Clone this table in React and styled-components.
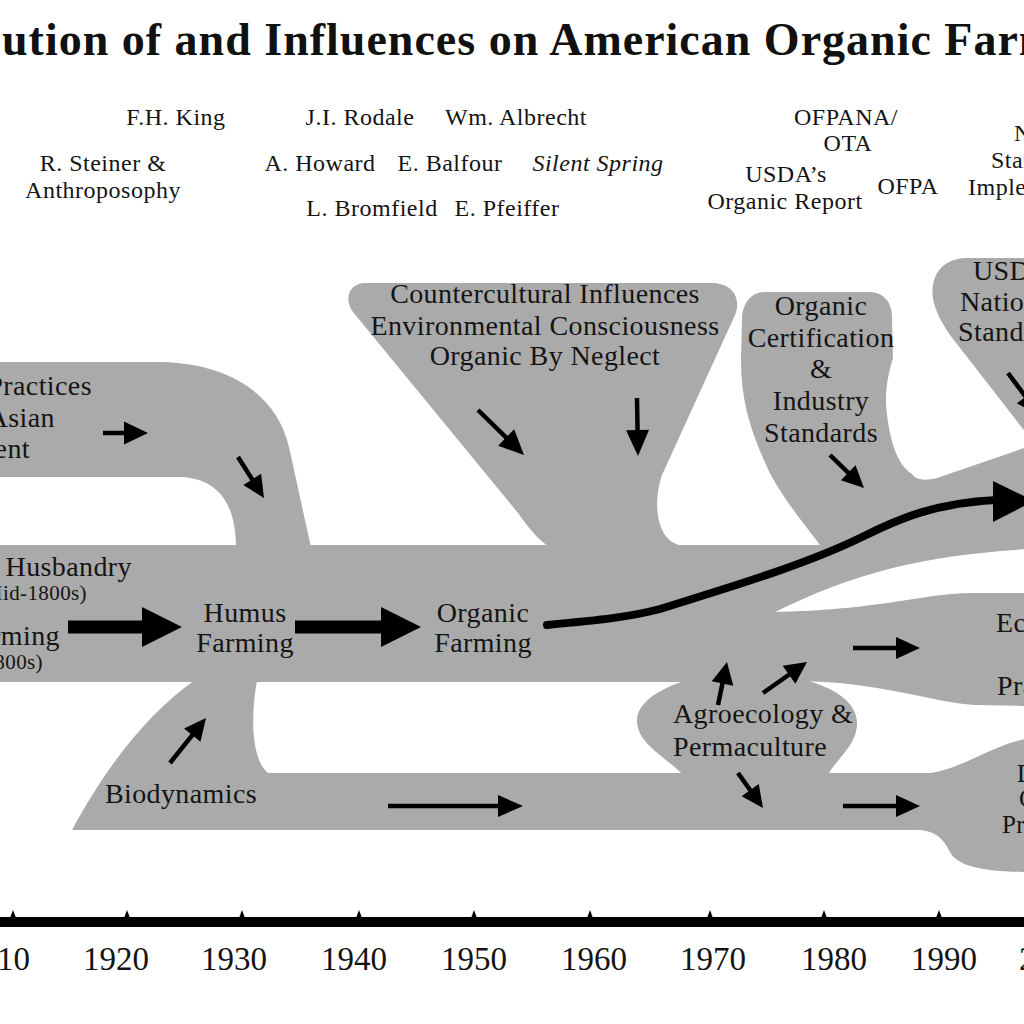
import React from "react";
import styled, { createGlobalStyle } from "styled-components";

/* page reset */
const GlobalStyle = createGlobalStyle`
  html, body {
    margin: 0;
    padding: 0;
    background: #fff;
  }
  body {
    font-family: "Liberation Serif", "Times New Roman", serif;
    color: #111;
  }
`;

const Page = styled.div`
  width: 1024px;
  height: 1024px;
  overflow: hidden;
  display: flex;
  flex-direction: column;
  background: #fff;
`;

const Title = styled.h1`
  flex: none;
  margin: 0;
  height: 72px;
  box-sizing: border-box;
  padding: 8px 0 0 2px;
  line-height: 64px;
  font-size: 46px;
  font-weight: bold;
  letter-spacing: 1px;
  white-space: nowrap;
  overflow: hidden;
  color: #111;
`;

const Diagram = styled.svg`
  flex: none;
  display: block;
  width: 1024px;
  height: 952px;
`;

const Stream = styled.path`
  fill: #aaaaaa;
`;

const Label = styled.text`
  font-family: "Liberation Serif", "Times New Roman", serif;
  font-size: ${(p) => p.$size}px;
  font-style: ${(p) => (p.$italic ? "italic" : "normal")};
  letter-spacing: ${(p) => p.$spacing}px;
  text-anchor: ${(p) => p.$anchor};
  fill: #141414;
`;

const Shaft = styled.line`
  stroke: #000;
  stroke-linecap: butt;
`;

const Head = styled.polygon`
  fill: #000;
`;

const Trend = styled.path`
  fill: none;
  stroke: #000;
  stroke-width: 8;
  stroke-linecap: round;
`;

const AxisBar = styled.rect`
  fill: #000;
`;

const Tick = styled.polygon`
  fill: #000;
`;

// grey streams of the diagram
const STREAMS = [
  // traditional practices band curving into main band
  "M -10 362 L 163 362 C 230 364 277 395 289 447 L 312 552 L 236 552 C 237 512 224 480 183 477 L -10 477 Z",
  // main band
  "M -10 545 L 776 545 L 776 682 L -10 682 Z",
  // countercultural funnel
  "M 365 283 L 712 283 C 732 283 742 298 735 315 L 662 475 C 655 495 655 520 665 535 C 670 542 676 545 690 548 L 556 550 C 542 545 530 530 518 513 L 353 312 C 343 298 350 283 365 283 Z",
  // certification
  "M 765 292 L 868 292 C 884 292 892 302 892 318 L 893 358 C 888 375 884 392 887 415 C 891 445 898 465 912 474 L 912 560 L 820 560 L 820 545 C 805 525 780 495 767 467 C 750 430 741 400 741 360 L 742 318 C 743 302 752 292 765 292 Z",
  // upper branch toward USDA standards
  "M 760 545 L 820 545 L 900 474 L 912 474 C 916 480 924 481 937 478 L 1030 446 L 1030 549 C 930 555 860 570 773 613 L 760 613 Z",
  // USDA standards
  "M 965 258 L 1030 258 L 1030 438 L 950 335 C 938 318 930 300 933 285 C 936 268 948 259 965 258 Z",
  // lower branch to the right
  "M 760 613 L 773 612 C 880 610 920 594 970 593 L 1030 593 L 1030 706 L 975 705 C 930 702 880 682 800 681 L 760 681 Z",
  // agroecology blob
  "M 687 680 C 655 690 636 705 637 722 C 638 745 668 758 683 775 L 828 775 C 835 760 858 745 857 722 C 856 702 835 688 805 680 Z",
  // biodynamics band
  "M 72 830 C 110 760 150 712 195 680 L 257 680 C 250 720 252 760 268 773 L 930 773 C 965 768 990 745 1030 738 L 1030 872 C 990 872 958 868 950 852 C 943 838 935 830 915 830 Z",
];

const TOP_LABELS = [
  { t: "F.H. King", x: 176, y: 125 },
  { t: "J.I. Rodale", x: 360, y: 125 },
  { t: "Wm. Albrecht", x: 516, y: 125 },
  { t: "R. Steiner &", x: 103, y: 171 },
  { t: "Anthroposophy", x: 103, y: 198 },
  { t: "A. Howard", x: 320, y: 171 },
  { t: "E. Balfour", x: 450, y: 171 },
  { t: "Silent Spring", x: 598, y: 171, italic: true },
  { t: "L. Bromfield", x: 372, y: 216 },
  { t: "E. Pfeiffer", x: 507, y: 216 },
  { t: "OFPANA/", x: 846, y: 125 },
  { t: "OTA", x: 848, y: 151 },
  { t: "USDA’s", x: 786, y: 182 },
  { t: "Organic Report", x: 785, y: 209 },
  { t: "OFPA", x: 908, y: 194 },
  { t: "NOP", x: 1014, y: 141, anchor: "start" },
  { t: "Standards", x: 991, y: 168, anchor: "start" },
  { t: "Implemented", x: 968, y: 195, anchor: "start" },
];

const STREAM_LABELS = [
  { t: "Countercultural Influences", x: 545, y: 303 },
  { t: "Environmental Consciousness", x: 545, y: 335 },
  { t: "Organic By Neglect", x: 545, y: 365 },
  { t: "Organic", x: 821, y: 315 },
  { t: "Certification", x: 821, y: 347 },
  { t: "&", x: 821, y: 378 },
  { t: "Industry", x: 821, y: 410 },
  { t: "Standards", x: 821, y: 442 },
  { t: "USDA", x: 973, y: 280, anchor: "start" },
  { t: "National", x: 960, y: 311, anchor: "start" },
  { t: "Standards", x: 958, y: 341, anchor: "start" },
  { t: "Traditional Practices", x: 92, y: 395, anchor: "end" },
  { t: "from the Asian", x: 55, y: 427, anchor: "end" },
  { t: "Continent", x: 30, y: 458, anchor: "end" },
  { t: "Animal Husbandry", x: 132, y: 576, anchor: "end" },
  { t: "(Mid-1800s)", x: 87, y: 600, anchor: "end", size: 21 },
  { t: "Farming", x: 60, y: 645, anchor: "end" },
  { t: "(Late 1800s)", x: 43, y: 669, anchor: "end", size: 21 },
  { t: "Humus", x: 245, y: 622 },
  { t: "Farming", x: 245, y: 652 },
  { t: "Organic", x: 483, y: 622 },
  { t: "Farming", x: 483, y: 652 },
  { t: "Biodynamics", x: 181, y: 803 },
  { t: "Agroecology &", x: 673, y: 723, anchor: "start" },
  { t: "Permaculture", x: 673, y: 756, anchor: "start" },
  { t: "Ecological", x: 996, y: 632, anchor: "start" },
  { t: "Practices", x: 997, y: 695, anchor: "start" },
  { t: "Direct", x: 1017, y: 782, anchor: "start", size: 25 },
  { t: "Consumer", x: 1019, y: 807, anchor: "start", size: 25 },
  { t: "Programs", x: 1002, y: 833, anchor: "start", size: 25 },
];

// [x1, y1, x2, y2, shaft width, head length, head width]
const ARROWS = [
  [103, 433, 148, 433, 4.5, 24, 23],
  [238, 457, 264, 498, 4.5, 22, 21],
  [478, 410, 524, 455, 4.5, 25, 23],
  [637, 398, 638, 456, 4.5, 26, 23],
  [830, 455, 864, 488, 4.5, 22, 21],
  [1008, 373, 1040, 416, 4.5, 24, 22],
  [170, 763, 206, 718, 4.5, 22, 21],
  [388, 806, 523, 806, 4.5, 25, 22],
  [843, 806, 920, 806, 4.5, 24, 22],
  [853, 648, 920, 648, 4.5, 24, 22],
  [718, 705, 727, 662, 4.5, 22, 22],
  [763, 693, 807, 662, 4.5, 22, 22],
  [738, 773, 763, 808, 4.5, 22, 21],
  [68, 627, 182, 627, 13, 40, 40],
  [295, 627, 421, 627, 13, 40, 40],
];

const YEARS = [
  { t: "1910", x: -3 },
  { t: "1920", x: 116 },
  { t: "1930", x: 234 },
  { t: "1940", x: 354 },
  { t: "1950", x: 474 },
  { t: "1960", x: 594 },
  { t: "1970", x: 713 },
  { t: "1980", x: 834 },
  { t: "1990", x: 944 },
  { t: "2000", x: 1052 },
];

const TICKS = [13, 127, 242, 359, 474, 590, 710, 824, 939];

function Arrow({ x1, y1, x2, y2, w, head, spread }) {
  const dx = x2 - x1;
  const dy = y2 - y1;
  const len = Math.hypot(dx, dy);
  const ux = dx / len;
  const uy = dy / len;
  const bx = x2 - ux * head;
  const by = y2 - uy * head;
  const px = (-uy * spread) / 2;
  const py = (ux * spread) / 2;
  return (
    <g>
      <Shaft x1={x1} y1={y1} x2={bx + ux * 2} y2={by + uy * 2} strokeWidth={w} />
      <Head points={`${x2},${y2} ${bx + px},${by + py} ${bx - px},${by - py}`} />
    </g>
  );
}

export default function App() {
  return (
    <Page>
      <GlobalStyle />
      <Title>ution of and Influences on American Organic Farming</Title>
      <Diagram viewBox="0 72 1024 952">
        {STREAMS.map((d, i) => (
          <Stream key={i} d={d} />
        ))}

        <Trend d="M 547 625 C 600 620 630 617 660 609 C 720 590 800 567 860 538 C 900 518 935 503 997 500" />
        <Head points="993,481 1034,501 993,522" />

        {ARROWS.map(([x1, y1, x2, y2, w, head, spread], i) => (
          <Arrow key={i} x1={x1} y1={y1} x2={x2} y2={y2} w={w} head={head} spread={spread} />
        ))}

        {TOP_LABELS.map((l) => (
          <Label
            key={l.t + l.x}
            x={l.x}
            y={l.y}
            $size={24}
            $spacing={0.5}
            $italic={l.italic}
            $anchor={l.anchor || "middle"}
          >
            {l.t}
          </Label>
        ))}

        {STREAM_LABELS.map((l) => (
          <Label
            key={l.t + l.x + l.y}
            x={l.x}
            y={l.y}
            $size={l.size || 28}
            $spacing={0.4}
            $anchor={l.anchor || "middle"}
          >
            {l.t}
          </Label>
        ))}

        <AxisBar x={-5} y={917} width={1040} height={10} />
        {TICKS.map((x) => (
          <Tick key={x} points={`${x - 3},918 ${x},910 ${x + 3},918`} />
        ))}
        {YEARS.map((y) => (
          <Label key={y.t} x={y.x} y={970} $size={33} $spacing={0} $anchor="middle">
            {y.t}
          </Label>
        ))}
      </Diagram>
    </Page>
  );
}
